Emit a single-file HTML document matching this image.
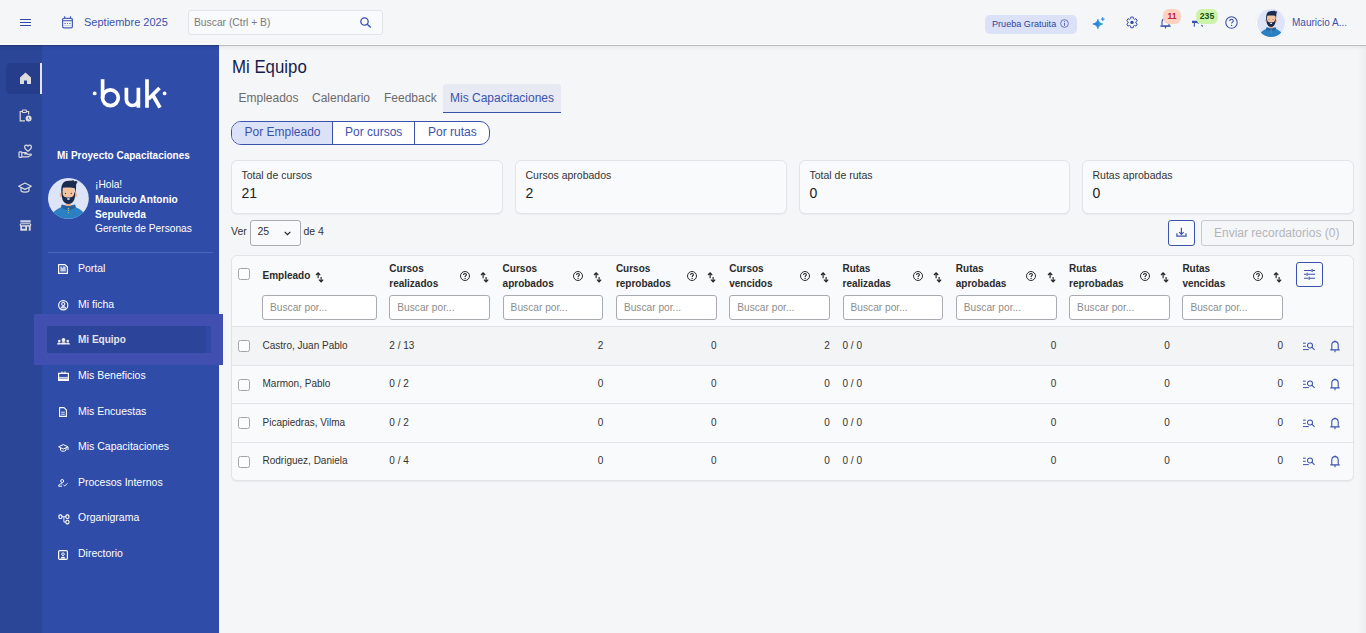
<!DOCTYPE html>
<html><head><meta charset="utf-8">
<style>
*{box-sizing:border-box;margin:0;padding:0}
html,body{width:1366px;height:633px;overflow:hidden}
body{font-family:"Liberation Sans",sans-serif;background:#f5f6f8;position:relative;color:#2b2b2b}
.a{position:absolute;white-space:nowrap}
svg{position:absolute;overflow:visible}
#hdr{position:absolute;left:0;top:0;width:1366px;height:45px;background:#f5f6f8;border-bottom:1px solid #f9fafb;z-index:5;box-shadow:0 1px 0 rgba(0,0,0,.19),0 2px 4px rgba(0,0,0,.07)}
#rail{position:absolute;left:0;top:45px;width:42px;height:588px;background:#2b4597}
#side{position:absolute;left:42px;top:45px;width:177px;height:588px;background:#2f4ca8}
.nav{position:absolute;left:78px;font-size:10.5px;color:#fff;line-height:12px}
.card{position:absolute;top:160px;width:272px;height:54px;border:1px solid #e2e4ea;border-radius:6px;background:#f9fafc;box-shadow:0 1px 1px rgba(0,0,0,.05)}
.card .l{position:absolute;left:9.5px;top:7.8px;font-size:10.5px;color:#333;line-height:12px}
.card .v{position:absolute;left:9.5px;top:24px;font-size:14px;color:#222;line-height:16px}
.th{position:absolute;font-size:10px;font-weight:bold;color:#2a2a2a;line-height:14.5px}
.inp{position:absolute;top:295px;height:24.5px;border:1px solid #a9abb0;border-radius:3px;background:#fff;font-size:10.2px;color:#8d8d8d;padding-left:7px;padding-top:1px;line-height:22px}
.cell{position:absolute;font-size:10px;color:#333;line-height:12px}
.r{text-align:right}
.cb{position:absolute;left:238px;width:12px;height:12px;border:1px solid #a2a4a8;border-radius:2.5px;background:#fcfcfd}
</style></head><body>

<!-- HEADER -->
<div id="hdr">
  <svg style="left:20px;top:18px" width="11" height="9" viewBox="0 0 11 9"><path d="M0.5 1.5H10.5M0.5 4.5H10.5M0.5 7.5H10.5" stroke="#3148a8" stroke-width="1.2" stroke-linecap="round"/></svg>
  <svg style="left:62px;top:16px" width="11" height="13" viewBox="0 0 11 13"><rect x="0.6" y="2.3" width="9.8" height="9.6" rx="1.3" fill="none" stroke="#4a60b4" stroke-width="1.2"/><path d="M0.6 4.7H10.4" stroke="#4a60b4" stroke-width="1.1"/><path d="M2.6 0.2V2.4M8.5 0.2V2.4" stroke="#4a60b4" stroke-width="1.2"/><path d="M2.4 7.5H3.8M5 7.5H6M7.2 7.5H8.6" stroke="#4a60b4" stroke-width="0.9"/><path d="M1.5 9.6H9.5" stroke="#4a60b4" stroke-width="0.4" opacity="0.6"/></svg>
  <div class="a" style="left:84px;top:15px;font-size:11px;color:#3b52ad;line-height:14px">Septiembre 2025</div>
  <div class="a" style="left:187.5px;top:10px;width:195px;height:24.5px;background:#f9fafc;border:1px solid #e3e4e8;border-radius:3px"></div>
  <div class="a" style="left:194px;top:16.5px;font-size:10.3px;color:#7a7a7a;line-height:12px">Buscar (Ctrl + B)</div>
  <svg style="left:360px;top:17px" width="12" height="11" viewBox="0 0 12 11"><circle cx="4.5" cy="4.5" r="3.7" fill="none" stroke="#3b52ad" stroke-width="1.3"/><path d="M7.2 7.2L10.8 10.6" stroke="#3b52ad" stroke-width="1.4"/></svg>
  <!-- right side -->
  <div class="a" style="left:985px;top:15px;width:92px;height:19px;background:#dbe2f7;border-radius:5px"></div>
  <div class="a" style="left:992px;top:17.8px;font-size:9.1px;color:#2f449c;line-height:12px">Prueba Gratuita</div>
  <svg style="left:1060px;top:19px" width="9" height="9" viewBox="0 0 10 10"><circle cx="5" cy="5" r="4.3" fill="none" stroke="#4a5fb2" stroke-width="0.9"/><path d="M5 4.3V7.6" stroke="#4a5fb2" stroke-width="1"/><circle cx="5" cy="2.8" r="0.6" fill="#4a5fb2"/></svg>
  <svg style="left:1092px;top:18px" width="12" height="12" viewBox="0 0 12 12"><defs><linearGradient id="sg" x1="0" y1="0" x2="1" y2="0"><stop offset="0" stop-color="#1f6cf6"/><stop offset="0.6" stop-color="#2b8fd8"/><stop offset="1" stop-color="#2db38c"/></linearGradient></defs><path d="M5.9 1C6.3 3.6 8 5.5 11 6C8 6.5 6.3 8.4 5.9 11C5.5 8.4 3.8 6.5 0.8 6C3.8 5.5 5.5 3.6 5.9 1Z" fill="url(#sg)" stroke="url(#sg)" stroke-width="0.6" stroke-linejoin="round"/><path d="M10.8 -0.8C11 0.2 11.7 0.9 12.7 1.1C11.7 1.3 11 2 10.8 3C10.6 2 9.9 1.3 8.9 1.1C9.9 0.9 10.6 0.2 10.8 -0.8Z" fill="#2e8fe0" stroke="#2e8fe0" stroke-width="0.5"/></svg>
  <svg style="left:1125px;top:16px" width="14" height="13" viewBox="0 0 14 13"><path d="M5.76 1.04L8.24 1.04L8.40 2.76L9.45 3.37L11.02 2.65L12.26 4.79L10.85 5.79L10.85 7.01L12.26 8.01L11.02 10.15L9.45 9.43L8.40 10.04L8.24 11.76L5.76 11.76L5.60 10.04L4.55 9.43L2.98 10.15L1.74 8.01L3.15 7.01L3.15 5.79L1.74 4.79L2.98 2.65L4.55 3.37L5.60 2.76Z" fill="none" stroke="#3b52ad" stroke-width="1.0" stroke-linejoin="round"/><circle cx="7" cy="6.4" r="1.7" fill="#3148a8"/></svg>
  <svg style="left:1160px;top:17px" width="11" height="13" viewBox="0 0 11 13"><path d="M2 9V5.5C2 3.2 3.5 1.6 5.5 1.6C7.5 1.6 9 3.2 9 5.5V9Z" fill="none" stroke="#3b52ad" stroke-width="1.1"/><path d="M0.3 9.2H10.7M5.5 9.5V11.5" stroke="#3b52ad" stroke-width="1.2"/></svg>
  <div class="a" style="left:1163px;top:9px;width:18px;height:15px;background:#fdd2c1;border-radius:6px;font-size:8.6px;font-weight:bold;color:#b8203a;text-align:center;line-height:15px">11</div>
  <svg style="left:1191px;top:19px" width="14" height="10" viewBox="0 0 14 10"><path d="M1 1.8H5.6L8 3.4V4.8L5.6 4.1H1Z" fill="#3b52ad"/><path d="M3.3 4V7.8M10.4 6.1L11.8 7.5" stroke="#3b52ad" stroke-width="1.1"/></svg>
  <div class="a" style="left:1196px;top:9px;width:22px;height:15px;background:#cdf2aa;border-radius:6px;font-size:8.6px;font-weight:bold;color:#0f5211;text-align:center;line-height:15px">235</div>
  <svg style="left:1225px;top:16px" width="13" height="13" viewBox="0 0 13 13"><circle cx="6.5" cy="6.5" r="5.7" fill="none" stroke="#3b52ad" stroke-width="1.1"/><path d="M4.7 5.1C4.7 3.9 5.5 3.3 6.5 3.3C7.5 3.3 8.3 3.9 8.3 4.9C8.3 6.1 6.6 6.2 6.6 7.6" fill="none" stroke="#3b52ad" stroke-width="1.1"/><circle cx="6.6" cy="9.4" r="0.7" fill="#3b52ad"/></svg>
  <div class="a" style="left:1256.40px;top:8.50px;width:29.6px;height:29.6px;border-radius:50%;background:#fff;box-shadow:0 0 1px rgba(0,0,0,.15)"></div><svg style="left:1255.14px;top:7.24px" width="32.25" height="32.25" viewBox="0 0 47 47"><clipPath id="ac1"><circle cx="23.4" cy="23.4" r="20.4"/></clipPath><circle cx="23.4" cy="23.4" r="20.4" fill="#dde4f7"/><g clip-path="url(#ac1)"><path d="M5.8 47C6 39 9.5 34.3 17.5 31.8L23.4 30.3L29.3 31.8C37.3 34.3 40.8 39 41 47Z" fill="#2b7fc3"/><path d="M16.8 29.6L23.4 31L30 29.6L31 32.6L25.4 35L23.4 32.2L21.4 35L15.8 32.6Z" fill="#2462a2"/><rect x="20.8" y="25.5" width="5.2" height="5.5" fill="#e9ae88"/><ellipse cx="15.9" cy="20" rx="1.3" ry="1.9" fill="#eeb48e"/><ellipse cx="30.9" cy="20" rx="1.3" ry="1.9" fill="#eeb48e"/><ellipse cx="23.4" cy="18.2" rx="6.6" ry="8.2" fill="#f4c4a0"/><path d="M16.6 17.5C16.4 25.5 19.3 29 23.4 29C27.5 29 30.4 25.5 30.2 17.5L29.3 17.5C29.2 21.5 27.2 22.6 23.4 22.6C19.6 22.6 17.6 21.5 17.5 17.5Z" fill="#1b2a4f"/><ellipse cx="23.4" cy="23.9" rx="1.6" ry="0.75" fill="#fff"/><path d="M16.4 18.5C15.6 10.5 17.6 6.6 22 6.1C25 5.8 27 6.1 28.3 5.1L29.3 6.6C30.6 5.6 31.8 6.3 32.6 7.2C31.6 7.8 31.5 8.8 31.1 9.8C31.2 13 30.8 15.5 30.4 18.5L29.7 13.2C27.6 12.2 21.6 12.2 17.9 12.8L17.3 18.5Z" fill="#1b2a4f"/><circle cx="20.6" cy="18.4" r="0.65" fill="#3b3b48"/><circle cx="26.2" cy="18.4" r="0.65" fill="#3b3b48"/><circle cx="23.4" cy="33.4" r="0.55" fill="#d9c05a"/><circle cx="23.4" cy="35.5" r="0.55" fill="#d9c05a"/><circle cx="23.4" cy="37.6" r="0.55" fill="#d9c05a"/></g></svg>
  <div class="a" style="left:1292px;top:17px;font-size:10px;color:#3b52ad;line-height:12px">Mauricio A...</div>
</div>

<!-- RAIL -->
<div id="rail"></div>
<div id="side"></div>
<!-- rail icons -->
<div class="a" style="left:6px;top:63px;width:34px;height:31px;background:#263d8c;border-radius:5px 0 0 5px"></div>
<div class="a" style="left:40px;top:63px;width:2px;height:31px;background:#e6e6e6"></div>
<svg style="left:20px;top:72px" width="11" height="12" viewBox="0 0 11 12"><path d="M5.5 0.5L11 5.5V12H7V8.5H4V12H0V5.5Z" fill="#dcdcdc"/></svg>
<svg style="left:19px;top:109px" width="13" height="13" viewBox="0 0 13 13"><path d="M6 11.8H1.2V2.5H3M7.8 2.5H9.6V5.5" fill="none" stroke="#dcdcdc" stroke-width="1.2"/><rect x="3.4" y="1" width="4" height="2.5" rx="0.6" fill="none" stroke="#dcdcdc" stroke-width="1.1"/><circle cx="9.6" cy="9.6" r="3" fill="#dcdcdc"/><path d="M9.5 8.2V9.8L10.6 10.5" stroke="#2b4597" stroke-width="0.8" fill="none"/></svg>
<svg style="left:14px;top:140px" width="24" height="24" viewBox="0 0 24 24"><path d="M14 11.2C11.6 9.5 10.6 8.3 10.6 6.9C10.6 5.9 11.3 5.2 12.3 5.2C13 5.2 13.6 5.6 14 6.2C14.4 5.6 15 5.2 15.7 5.2C16.7 5.2 17.4 5.9 17.4 6.9C17.4 8.3 16.4 9.5 14 11.2Z" fill="none" stroke="#dcdcdc" stroke-width="1.2" stroke-linejoin="round"/><rect x="5" y="11.8" width="2.8" height="5.5" rx="0.7" fill="none" stroke="#dcdcdc" stroke-width="1.2"/><path d="M7.8 12.6H11.6C12.4 12.6 13 13.1 13.2 13.9H10.2M7.8 16.8H14.3L17.2 15.1C17.6 14.6 17.3 13.9 16.6 14L13.3 14.6" fill="none" stroke="#dcdcdc" stroke-width="1.2" stroke-linejoin="round"/></svg>
<svg style="left:18px;top:182px" width="14" height="12" viewBox="0 0 14 12"><path d="M7 1L13.3 4.2L7 7.4L0.7 4.2Z" fill="none" stroke="#dcdcdc" stroke-width="1.2" stroke-linejoin="round"/><path d="M3 5.6V8.8C4.5 10.6 9.5 10.6 11 8.8V5.6" fill="none" stroke="#dcdcdc" stroke-width="1.2"/></svg>
<svg style="left:19px;top:219px" width="13" height="13" viewBox="0 0 13 13"><rect x="1.3" y="1.2" width="10.4" height="2.3" fill="#c5cbe3"/><rect x="1.2" y="4.7" width="10.6" height="2.1" rx="1.05" fill="none" stroke="#dcdcdc" stroke-width="1.1"/><path d="M1.3 6.8H11.7V11.7H1.3Z" fill="#dcdcdc"/><rect x="3" y="7.7" width="3.3" height="2" fill="#2b4597"/><rect x="8" y="7.7" width="1.8" height="4.1" fill="#2b4597"/></svg>

<!-- logo -->
<svg style="left:90px;top:76px" width="80" height="34" viewBox="90 76 80 34"><circle cx="94.7" cy="93.4" r="1.9" fill="#fff"/><circle cx="164.6" cy="93.4" r="1.9" fill="#fff"/><g fill="none" stroke="#fff" stroke-width="3.7"><path d="M102.6 79.2V98"/><circle cx="110.4" cy="97.8" r="7.9"/><path d="M126.4 87.7V99.5A6 6 0 0 0 138.4 99.5V87.7M138.4 99V107.7"/><path d="M147 79.2V107.7M159.5 88L148.5 99M152.8 95L160 107.7"/></g></svg>

<div class="a" style="left:57px;top:150px;font-size:10px;font-weight:bold;color:#fff;line-height:12px">Mi Proyecto Capacitaciones</div>
<svg style="left:45px;top:175px" width="47" height="47" viewBox="0 0 47 47"><clipPath id="ac2"><circle cx="23.4" cy="23.4" r="20.4"/></clipPath><circle cx="23.4" cy="23.4" r="20.4" fill="#dde4f7"/><g clip-path="url(#ac2)"><path d="M5.8 47C6 39 9.5 34.3 17.5 31.8L23.4 30.3L29.3 31.8C37.3 34.3 40.8 39 41 47Z" fill="#2b7fc3"/><path d="M16.8 29.6L23.4 31L30 29.6L31 32.6L25.4 35L23.4 32.2L21.4 35L15.8 32.6Z" fill="#2462a2"/><rect x="20.8" y="25.5" width="5.2" height="5.5" fill="#e9ae88"/><ellipse cx="15.9" cy="20" rx="1.3" ry="1.9" fill="#eeb48e"/><ellipse cx="30.9" cy="20" rx="1.3" ry="1.9" fill="#eeb48e"/><ellipse cx="23.4" cy="18.2" rx="6.6" ry="8.2" fill="#f4c4a0"/><path d="M16.6 17.5C16.4 25.5 19.3 29 23.4 29C27.5 29 30.4 25.5 30.2 17.5L29.3 17.5C29.2 21.5 27.2 22.6 23.4 22.6C19.6 22.6 17.6 21.5 17.5 17.5Z" fill="#1b2a4f"/><ellipse cx="23.4" cy="23.9" rx="1.6" ry="0.75" fill="#fff"/><path d="M16.4 18.5C15.6 10.5 17.6 6.6 22 6.1C25 5.8 27 6.1 28.3 5.1L29.3 6.6C30.6 5.6 31.8 6.3 32.6 7.2C31.6 7.8 31.5 8.8 31.1 9.8C31.2 13 30.8 15.5 30.4 18.5L29.7 13.2C27.6 12.2 21.6 12.2 17.9 12.8L17.3 18.5Z" fill="#1b2a4f"/><circle cx="20.6" cy="18.4" r="0.65" fill="#3b3b48"/><circle cx="26.2" cy="18.4" r="0.65" fill="#3b3b48"/><circle cx="23.4" cy="33.4" r="0.55" fill="#d9c05a"/><circle cx="23.4" cy="35.5" r="0.55" fill="#d9c05a"/><circle cx="23.4" cy="37.6" r="0.55" fill="#d9c05a"/></g></svg>
<div class="a" style="left:95px;top:178.5px;font-size:10.2px;color:#fff;line-height:12px">¡Hola!</div>
<div class="a" style="left:95px;top:194px;font-size:10.2px;font-weight:bold;color:#fff;line-height:12px">Mauricio Antonio</div>
<div class="a" style="left:95px;top:208.5px;font-size:10.2px;font-weight:bold;color:#fff;line-height:12px">Sepulveda</div>
<div class="a" style="left:95px;top:222.5px;font-size:10.2px;color:#fff;line-height:12px">Gerente de Personas</div>
<div class="a" style="left:48px;top:252px;width:165px;height:1px;background:#4d65bb"></div>

<!-- nav -->
<div class="a" style="left:34px;top:314px;width:189px;height:50.5px;background:#4150b0"></div>
<div class="a" style="left:47px;top:325.7px;width:164px;height:27px;background:#3049a7"></div><div class="a" style="left:47px;top:325.7px;width:158.7px;height:27px;background:#2c449a;border-radius:3px"></div>
<div class="nav" style="top:262px">Portal</div>
<div class="nav" style="top:298px">Mi ficha</div>
<div class="nav" style="top:334px;color:#e4e4ea;font-weight:bold;font-size:10px">Mi Equipo</div>
<div class="nav" style="top:369px">Mis Beneficios</div>
<div class="nav" style="top:404.5px">Mis Encuestas</div>
<div class="nav" style="top:440px">Mis Capacitaciones</div>
<div class="nav" style="top:475.5px">Procesos Internos</div>
<div class="nav" style="top:511px">Organigrama</div>
<div class="nav" style="top:546.5px">Directorio</div>

<!-- nav icons -->
<svg style="left:58px;top:264px" width="10" height="10" viewBox="0 0 10 10"><path d="M0.6 0.6H7L9.4 3V9.4H0.6Z" fill="none" stroke="#fff" stroke-width="1.2" stroke-linejoin="round"/><rect x="2.3" y="2.5" width="5.4" height="5" fill="#c9cde6"/><path d="M4.5 2.3V4" stroke="#2f4ca8" stroke-width="0.8"/></svg>
<svg style="left:58px;top:299.5px" width="10.5" height="10.5" viewBox="0 0 10 10"><circle cx="5" cy="5" r="4.4" fill="none" stroke="#fff" stroke-width="1.1"/><circle cx="5" cy="3.8" r="1.5" fill="none" stroke="#fff" stroke-width="1"/><path d="M2.3 8.2C3 6.5 4 6.2 5 6.2C6 6.2 7 6.5 7.7 8.2" fill="#d0d4ea" stroke="#fff" stroke-width="0.8"/></svg>
<svg style="left:56.5px;top:337.5px" width="13" height="7" viewBox="0 0 13 7"><circle cx="6.5" cy="2" r="1.9" fill="#eeeef2"/><circle cx="2.3" cy="3" r="1.3" fill="#eeeef2"/><circle cx="10.7" cy="3" r="1.3" fill="#eeeef2"/><path d="M3.4 6.5C3.6 4.8 4.8 4.3 6.5 4.3C8.2 4.3 9.4 4.8 9.6 6.5Z M0 6.5C0.2 5.1 1 4.6 2.3 4.6C3 4.6 3.5 4.8 3.8 5.2L3.2 6.5Z M13 6.5C12.8 5.1 12 4.6 10.7 4.6C10 4.6 9.5 4.8 9.2 5.2L9.8 6.5Z" fill="#eeeef2"/></svg>
<svg style="left:58px;top:371px" width="11" height="10" viewBox="0 0 11 10"><path d="M0.6 2.4H10.4V9.4H0.6Z" fill="none" stroke="#fff" stroke-width="1.2"/><path d="M1 6.5H10" stroke="#d0d4ea" stroke-width="1.2"/><path d="M3 2.4L4 0.6L5.5 2.4L7 0.6L8 2.4" fill="none" stroke="#e0e3f2" stroke-width="0.9"/><path d="M1 8.3H10" stroke="#fff" stroke-width="1.6"/></svg>
<svg style="left:59px;top:407px" width="8" height="10" viewBox="0 0 8 10"><path d="M0.6 0.6H5L7.4 3V9.4H0.6Z" fill="none" stroke="#fff" stroke-width="1.1" stroke-linejoin="round"/><path d="M2.2 5.2H5.8M2.2 7.2H5.8" stroke="#fff" stroke-width="0.9"/></svg>
<svg style="left:58px;top:444px" width="11" height="8" viewBox="0 0 11 8"><path d="M5.3 0.6L10 2.8L5.3 5L0.6 2.8Z" fill="none" stroke="#fff" stroke-width="1" stroke-linejoin="round"/><path d="M2.5 4V6.2C3.5 7.6 7 7.6 8 6.2V4M10 2.8V6" fill="none" stroke="#fff" stroke-width="1"/></svg>
<svg style="left:58px;top:479px" width="10" height="8" viewBox="0 0 10 8"><circle cx="4.2" cy="2" r="1.5" fill="none" stroke="#fff" stroke-width="1"/><path d="M4 7.2H0.6C0.6 5.5 1.8 4.8 4.2 4.8" fill="none" stroke="#fff" stroke-width="1"/><path d="M5.3 5.6L6.7 7L9.6 4.3" fill="none" stroke="#fff" stroke-width="0.9"/></svg>
<svg style="left:57.5px;top:513.5px" width="12" height="11" viewBox="0 0 12 11"><rect x="0.9" y="0.9" width="3" height="3.6" rx="1.2" fill="none" stroke="#fff" stroke-width="1.1"/><rect x="7.9" y="0.9" width="3" height="3.6" rx="1.2" fill="none" stroke="#fff" stroke-width="1.1"/><rect x="7.9" y="6.3" width="3" height="3.6" rx="1.2" fill="none" stroke="#fff" stroke-width="1.1"/><path d="M3.9 2.7H7.9M5.9 2.7V8.1H7.9" fill="none" stroke="#fff" stroke-width="0.9"/></svg>
<svg style="left:58px;top:550px" width="10" height="10" viewBox="0 0 10 10"><rect x="0.6" y="0.6" width="8.8" height="8.8" rx="1.2" fill="none" stroke="#fff" stroke-width="1.2"/><circle cx="5" cy="4.2" r="1.3" fill="none" stroke="#fff" stroke-width="1"/><path d="M2.5 8.5C3 7 4 6.7 5 6.7C6 6.7 7 7 7.5 8.5Z" fill="#fff"/></svg>

<!-- MAIN -->
<div class="a" style="left:231.5px;top:57.2px;font-size:17.8px;color:#161c4a;line-height:20px;transform:scaleX(0.945);transform-origin:0 0">Mi Equipo</div>
<div class="a" style="left:238.5px;top:91px;font-size:12px;color:#6b6b6b;line-height:14px">Empleados</div>
<div class="a" style="left:312px;top:91px;font-size:12px;color:#6b6b6b;line-height:14px">Calendario</div>
<div class="a" style="left:384px;top:91px;font-size:12px;color:#6b6b6b;line-height:14px">Feedback</div>
<div class="a" style="left:443px;top:84px;width:118px;height:29px;background:#e7e9f3;border-radius:3px 3px 0 0;border-bottom:1.5px solid #3b52ad"></div>
<div class="a" style="left:450px;top:91px;font-size:12px;color:#3b52ad;line-height:14px">Mis Capacitaciones</div>
<!-- segmented -->
<div class="a" style="left:231px;top:121px;width:259px;height:24px;border:1px solid #3b52ad;border-radius:10px;background:#fff;overflow:hidden">
  <div class="a" style="left:0;top:0;width:101px;height:22px;background:#dbe2f7;border-right:1px solid #3b52ad"></div>
  <div class="a" style="left:181.5px;top:0;width:1px;height:22px;background:#3b52ad"></div>
</div>
<div class="a" style="left:244.5px;top:125px;font-size:12px;color:#3b52ad;line-height:14px">Por Empleado</div>
<div class="a" style="left:345px;top:125px;font-size:12px;color:#3b52ad;line-height:14px">Por cursos</div>
<div class="a" style="left:428px;top:125px;font-size:12px;color:#3b52ad;line-height:14px">Por rutas</div>
<!-- cards -->
<div class="card" style="left:231px"><div class="l">Total de cursos</div><div class="v">21</div></div>
<div class="card" style="left:515px"><div class="l">Cursos aprobados</div><div class="v">2</div></div>
<div class="card" style="left:799px;width:271px"><div class="l">Total de rutas</div><div class="v">0</div></div>
<div class="card" style="left:1082px"><div class="l">Rutas aprobadas</div><div class="v">0</div></div>
<!-- controls -->
<div class="a" style="left:231px;top:225px;font-size:10.5px;color:#333;line-height:12px">Ver</div>
<div class="a" style="left:250px;top:220px;width:51px;height:26px;border:1px solid #a9abb0;border-radius:3px;background:#f9fafc"></div>
<div class="a" style="left:257.5px;top:225px;font-size:10.5px;color:#333;line-height:12px">25</div>
<svg style="left:284px;top:230.8px" width="7" height="5" viewBox="0 0 7 5"><path d="M0.7 0.8L3.5 3.6L6.3 0.8" fill="none" stroke="#222" stroke-width="1.2"/></svg>
<div class="a" style="left:303.5px;top:225px;font-size:10.5px;color:#333;line-height:12px">de 4</div>
<div class="a" style="left:1168px;top:220px;width:27px;height:26px;border:1px solid #3b52ad;border-radius:3px;background:#f9fafc"></div>
<svg style="left:1176px;top:227px" width="11" height="11" viewBox="0 0 11 11"><path d="M5.4 0.8V7.2M3.2 5.1L5.4 7.3L7.6 5.1M0.9 6.3V9.2H10V6.3" fill="none" stroke="#3b52ad" stroke-width="1.2"/></svg>
<div class="a" style="left:1201px;top:220px;width:153px;height:26px;border:1px solid #c9cacd;border-radius:3px;background:#f5f6f8"></div>
<div class="a" style="left:1214px;top:226px;font-size:12px;color:#b4b5b8;line-height:14px">Enviar recordatorios (0)</div>
<!-- table -->
<div class="a" style="left:231px;top:255px;width:1123px;height:226px;border:1px solid #e3e4e8;border-radius:6px;background:#f9fafc;box-shadow:0 1px 1px rgba(0,0,0,.06)"></div>
<div class="a" style="left:232px;top:325.5px;width:1121px;height:1px;background:#e3e4e8"></div>
<div class="a" style="left:1296px;top:262px;width:27px;height:25px;border:1px solid #3b52ad;border-radius:3px;background:#f9fafc"></div>
<svg style="left:1304px;top:268px" width="11" height="12" viewBox="0 0 11 12"><path d="M0 2.5H7.3M8.9 2.5H11M0 6.3H2.3M3.9 6.3H11M0 10.3H4.4M6 10.3H11" fill="none" stroke="#3b52ad" stroke-width="1.1"/><path d="M8.1 1V4M3.1 4.8V7.8M5.2 8.8V11.8" fill="none" stroke="#3b52ad" stroke-width="1.2"/></svg>

<!-- TABLE START -->
<div class="cb" style="top:268px"></div>
<div class="th" style="left:262.5px;top:268.5px">Empleado</div>
<svg style="left:314.7px;top:271.5px" width="9" height="10" viewBox="0 0 9 10"><path d="M3.1 6.2V0.9M1 3L3.1 0.8L5.2 3M6.1 4.9V9.8M4 7.7L6.1 9.9L8.2 7.7" fill="none" stroke="#222" stroke-width="1.15"/></svg>
<div class="inp" style="left:262px;width:115px">Buscar por...</div>
<div class="th" style="left:389.3px;top:262px">Cursos<br>realizados</div>
<svg style="left:459.9px;top:271px" width="10" height="10" viewBox="0 0 10 10"><circle cx="5" cy="5" r="4.5" fill="none" stroke="#222" stroke-width="0.95"/><path d="M3.6 3.9C3.6 3 4.2 2.4 5 2.4C5.8 2.4 6.4 3 6.4 3.7C6.4 4.6 5.1 4.7 5.1 5.9" fill="none" stroke="#222" stroke-width="1.05"/><circle cx="5.1" cy="7.4" r="0.65" fill="#222"/></svg>
<svg style="left:480.1px;top:271.5px" width="9" height="10" viewBox="0 0 9 10"><path d="M3.1 6.2V0.9M1 3L3.1 0.8L5.2 3M6.1 4.9V9.8M4 7.7L6.1 9.9L8.2 7.7" fill="none" stroke="#222" stroke-width="1.15"/></svg>
<div class="inp" style="left:389.3px;width:100.8px">Buscar por...</div>
<div class="th" style="left:502.6px;top:262px">Cursos<br>aprobados</div>
<svg style="left:573.2px;top:271px" width="10" height="10" viewBox="0 0 10 10"><circle cx="5" cy="5" r="4.5" fill="none" stroke="#222" stroke-width="0.95"/><path d="M3.6 3.9C3.6 3 4.2 2.4 5 2.4C5.8 2.4 6.4 3 6.4 3.7C6.4 4.6 5.1 4.7 5.1 5.9" fill="none" stroke="#222" stroke-width="1.05"/><circle cx="5.1" cy="7.4" r="0.65" fill="#222"/></svg>
<svg style="left:593.4px;top:271.5px" width="9" height="10" viewBox="0 0 9 10"><path d="M3.1 6.2V0.9M1 3L3.1 0.8L5.2 3M6.1 4.9V9.8M4 7.7L6.1 9.9L8.2 7.7" fill="none" stroke="#222" stroke-width="1.15"/></svg>
<div class="inp" style="left:502.6px;width:100.8px">Buscar por...</div>
<div class="th" style="left:615.9px;top:262px">Cursos<br>reprobados</div>
<svg style="left:686.5px;top:271px" width="10" height="10" viewBox="0 0 10 10"><circle cx="5" cy="5" r="4.5" fill="none" stroke="#222" stroke-width="0.95"/><path d="M3.6 3.9C3.6 3 4.2 2.4 5 2.4C5.8 2.4 6.4 3 6.4 3.7C6.4 4.6 5.1 4.7 5.1 5.9" fill="none" stroke="#222" stroke-width="1.05"/><circle cx="5.1" cy="7.4" r="0.65" fill="#222"/></svg>
<svg style="left:706.7px;top:271.5px" width="9" height="10" viewBox="0 0 9 10"><path d="M3.1 6.2V0.9M1 3L3.1 0.8L5.2 3M6.1 4.9V9.8M4 7.7L6.1 9.9L8.2 7.7" fill="none" stroke="#222" stroke-width="1.15"/></svg>
<div class="inp" style="left:615.9px;width:100.8px">Buscar por...</div>
<div class="th" style="left:729.2px;top:262px">Cursos<br>vencidos</div>
<svg style="left:799.8px;top:271px" width="10" height="10" viewBox="0 0 10 10"><circle cx="5" cy="5" r="4.5" fill="none" stroke="#222" stroke-width="0.95"/><path d="M3.6 3.9C3.6 3 4.2 2.4 5 2.4C5.8 2.4 6.4 3 6.4 3.7C6.4 4.6 5.1 4.7 5.1 5.9" fill="none" stroke="#222" stroke-width="1.05"/><circle cx="5.1" cy="7.4" r="0.65" fill="#222"/></svg>
<svg style="left:820.0px;top:271.5px" width="9" height="10" viewBox="0 0 9 10"><path d="M3.1 6.2V0.9M1 3L3.1 0.8L5.2 3M6.1 4.9V9.8M4 7.7L6.1 9.9L8.2 7.7" fill="none" stroke="#222" stroke-width="1.15"/></svg>
<div class="inp" style="left:729.2px;width:100.8px">Buscar por...</div>
<div class="th" style="left:842.5px;top:262px">Rutas<br>realizadas</div>
<svg style="left:913.1px;top:271px" width="10" height="10" viewBox="0 0 10 10"><circle cx="5" cy="5" r="4.5" fill="none" stroke="#222" stroke-width="0.95"/><path d="M3.6 3.9C3.6 3 4.2 2.4 5 2.4C5.8 2.4 6.4 3 6.4 3.7C6.4 4.6 5.1 4.7 5.1 5.9" fill="none" stroke="#222" stroke-width="1.05"/><circle cx="5.1" cy="7.4" r="0.65" fill="#222"/></svg>
<svg style="left:933.3px;top:271.5px" width="9" height="10" viewBox="0 0 9 10"><path d="M3.1 6.2V0.9M1 3L3.1 0.8L5.2 3M6.1 4.9V9.8M4 7.7L6.1 9.9L8.2 7.7" fill="none" stroke="#222" stroke-width="1.15"/></svg>
<div class="inp" style="left:842.5px;width:100.8px">Buscar por...</div>
<div class="th" style="left:955.8px;top:262px">Rutas<br>aprobadas</div>
<svg style="left:1026.4px;top:271px" width="10" height="10" viewBox="0 0 10 10"><circle cx="5" cy="5" r="4.5" fill="none" stroke="#222" stroke-width="0.95"/><path d="M3.6 3.9C3.6 3 4.2 2.4 5 2.4C5.8 2.4 6.4 3 6.4 3.7C6.4 4.6 5.1 4.7 5.1 5.9" fill="none" stroke="#222" stroke-width="1.05"/><circle cx="5.1" cy="7.4" r="0.65" fill="#222"/></svg>
<svg style="left:1046.6px;top:271.5px" width="9" height="10" viewBox="0 0 9 10"><path d="M3.1 6.2V0.9M1 3L3.1 0.8L5.2 3M6.1 4.9V9.8M4 7.7L6.1 9.9L8.2 7.7" fill="none" stroke="#222" stroke-width="1.15"/></svg>
<div class="inp" style="left:955.8px;width:100.8px">Buscar por...</div>
<div class="th" style="left:1069.1px;top:262px">Rutas<br>reprobadas</div>
<svg style="left:1139.7px;top:271px" width="10" height="10" viewBox="0 0 10 10"><circle cx="5" cy="5" r="4.5" fill="none" stroke="#222" stroke-width="0.95"/><path d="M3.6 3.9C3.6 3 4.2 2.4 5 2.4C5.8 2.4 6.4 3 6.4 3.7C6.4 4.6 5.1 4.7 5.1 5.9" fill="none" stroke="#222" stroke-width="1.05"/><circle cx="5.1" cy="7.4" r="0.65" fill="#222"/></svg>
<svg style="left:1159.9px;top:271.5px" width="9" height="10" viewBox="0 0 9 10"><path d="M3.1 6.2V0.9M1 3L3.1 0.8L5.2 3M6.1 4.9V9.8M4 7.7L6.1 9.9L8.2 7.7" fill="none" stroke="#222" stroke-width="1.15"/></svg>
<div class="inp" style="left:1069.1px;width:100.8px">Buscar por...</div>
<div class="th" style="left:1182.4px;top:262px">Rutas<br>vencidas</div>
<svg style="left:1253.0px;top:271px" width="10" height="10" viewBox="0 0 10 10"><circle cx="5" cy="5" r="4.5" fill="none" stroke="#222" stroke-width="0.95"/><path d="M3.6 3.9C3.6 3 4.2 2.4 5 2.4C5.8 2.4 6.4 3 6.4 3.7C6.4 4.6 5.1 4.7 5.1 5.9" fill="none" stroke="#222" stroke-width="1.05"/><circle cx="5.1" cy="7.4" r="0.65" fill="#222"/></svg>
<svg style="left:1273.2px;top:271.5px" width="9" height="10" viewBox="0 0 9 10"><path d="M3.1 6.2V0.9M1 3L3.1 0.8L5.2 3M6.1 4.9V9.8M4 7.7L6.1 9.9L8.2 7.7" fill="none" stroke="#222" stroke-width="1.15"/></svg>
<div class="inp" style="left:1182.4px;width:100.8px">Buscar por...</div>
<div class="a" style="left:232px;top:326.3px;width:1121px;height:38.7px;background:#f3f4f6"></div>
<div class="cb" style="top:340.2px"></div>
<div class="cell" style="left:262.5px;top:340.33px">Castro, Juan Pablo</div>
<div class="cell" style="left:389.3px;top:340.33px">2 / 13</div>
<div class="cell r" style="left:502.6px;width:100.6px;top:340.33px">2</div>
<div class="cell r" style="left:615.9px;width:100.6px;top:340.33px">0</div>
<div class="cell r" style="left:729.2px;width:100.6px;top:340.33px">2</div>
<div class="cell" style="left:842.5px;top:340.33px">0 / 0</div>
<div class="cell r" style="left:955.8px;width:100.6px;top:340.33px">0</div>
<div class="cell r" style="left:1069.1px;width:100.6px;top:340.33px">0</div>
<div class="cell r" style="left:1182.4px;width:100.6px;top:340.33px">0</div>
<svg style="left:1303.3px;top:342.4px" width="12" height="9" viewBox="0 0 12 9"><path d="M0 1.2H2.8M0 4.3H2.8M0 7.6H5.8" stroke="#3b52ad" stroke-width="1"/><circle cx="7" cy="3.4" r="2.5" fill="none" stroke="#3b52ad" stroke-width="1.05"/><path d="M8.8 5.2L11.6 7.9" stroke="#3b52ad" stroke-width="1.05"/></svg>
<svg style="left:1329.5px;top:340.4px" width="10" height="13" viewBox="0 0 10 13"><path d="M1.8 9.8V5C1.8 3 3.2 1.6 5 1.6C6.8 1.6 8.2 3 8.2 5V9.8" fill="none" stroke="#3b52ad" stroke-width="1.1"/><path d="M0.3 9.9H9.7M5 0.4V1.7M5 10V12.2" stroke="#3b52ad" stroke-width="1.1"/></svg>
<div class="a" style="left:232px;top:365px;width:1121px;height:1px;background:#e3e4e8"></div>
<div class="cb" style="top:378.8px"></div>
<div class="cell" style="left:262.5px;top:377.93px">Marmon, Pablo</div>
<div class="cell" style="left:389.3px;top:377.93px">0 / 2</div>
<div class="cell r" style="left:502.6px;width:100.6px;top:377.93px">0</div>
<div class="cell r" style="left:615.9px;width:100.6px;top:377.93px">0</div>
<div class="cell r" style="left:729.2px;width:100.6px;top:377.93px">0</div>
<div class="cell" style="left:842.5px;top:377.93px">0 / 0</div>
<div class="cell r" style="left:955.8px;width:100.6px;top:377.93px">0</div>
<div class="cell r" style="left:1069.1px;width:100.6px;top:377.93px">0</div>
<div class="cell r" style="left:1182.4px;width:100.6px;top:377.93px">0</div>
<svg style="left:1303.3px;top:380.0px" width="12" height="9" viewBox="0 0 12 9"><path d="M0 1.2H2.8M0 4.3H2.8M0 7.6H5.8" stroke="#3b52ad" stroke-width="1"/><circle cx="7" cy="3.4" r="2.5" fill="none" stroke="#3b52ad" stroke-width="1.05"/><path d="M8.8 5.2L11.6 7.9" stroke="#3b52ad" stroke-width="1.05"/></svg>
<svg style="left:1329.5px;top:378.0px" width="10" height="13" viewBox="0 0 10 13"><path d="M1.8 9.8V5C1.8 3 3.2 1.6 5 1.6C6.8 1.6 8.2 3 8.2 5V9.8" fill="none" stroke="#3b52ad" stroke-width="1.1"/><path d="M0.3 9.9H9.7M5 0.4V1.7M5 10V12.2" stroke="#3b52ad" stroke-width="1.1"/></svg>
<div class="a" style="left:232px;top:403px;width:1121px;height:1px;background:#e3e4e8"></div>
<div class="cb" style="top:417.4px"></div>
<div class="cell" style="left:262.5px;top:416.73px">Picapiedras, Vilma</div>
<div class="cell" style="left:389.3px;top:416.73px">0 / 2</div>
<div class="cell r" style="left:502.6px;width:100.6px;top:416.73px">0</div>
<div class="cell r" style="left:615.9px;width:100.6px;top:416.73px">0</div>
<div class="cell r" style="left:729.2px;width:100.6px;top:416.73px">0</div>
<div class="cell" style="left:842.5px;top:416.73px">0 / 0</div>
<div class="cell r" style="left:955.8px;width:100.6px;top:416.73px">0</div>
<div class="cell r" style="left:1069.1px;width:100.6px;top:416.73px">0</div>
<div class="cell r" style="left:1182.4px;width:100.6px;top:416.73px">0</div>
<svg style="left:1303.3px;top:418.8px" width="12" height="9" viewBox="0 0 12 9"><path d="M0 1.2H2.8M0 4.3H2.8M0 7.6H5.8" stroke="#3b52ad" stroke-width="1"/><circle cx="7" cy="3.4" r="2.5" fill="none" stroke="#3b52ad" stroke-width="1.05"/><path d="M8.8 5.2L11.6 7.9" stroke="#3b52ad" stroke-width="1.05"/></svg>
<svg style="left:1329.5px;top:416.8px" width="10" height="13" viewBox="0 0 10 13"><path d="M1.8 9.8V5C1.8 3 3.2 1.6 5 1.6C6.8 1.6 8.2 3 8.2 5V9.8" fill="none" stroke="#3b52ad" stroke-width="1.1"/><path d="M0.3 9.9H9.7M5 0.4V1.7M5 10V12.2" stroke="#3b52ad" stroke-width="1.1"/></svg>
<div class="a" style="left:232px;top:442px;width:1121px;height:1px;background:#e3e4e8"></div>
<div class="cb" style="top:456.0px"></div>
<div class="cell" style="left:262.5px;top:454.63px">Rodriguez, Daniela</div>
<div class="cell" style="left:389.3px;top:454.63px">0 / 4</div>
<div class="cell r" style="left:502.6px;width:100.6px;top:454.63px">0</div>
<div class="cell r" style="left:615.9px;width:100.6px;top:454.63px">0</div>
<div class="cell r" style="left:729.2px;width:100.6px;top:454.63px">0</div>
<div class="cell" style="left:842.5px;top:454.63px">0 / 0</div>
<div class="cell r" style="left:955.8px;width:100.6px;top:454.63px">0</div>
<div class="cell r" style="left:1069.1px;width:100.6px;top:454.63px">0</div>
<div class="cell r" style="left:1182.4px;width:100.6px;top:454.63px">0</div>
<svg style="left:1303.3px;top:456.7px" width="12" height="9" viewBox="0 0 12 9"><path d="M0 1.2H2.8M0 4.3H2.8M0 7.6H5.8" stroke="#3b52ad" stroke-width="1"/><circle cx="7" cy="3.4" r="2.5" fill="none" stroke="#3b52ad" stroke-width="1.05"/><path d="M8.8 5.2L11.6 7.9" stroke="#3b52ad" stroke-width="1.05"/></svg>
<svg style="left:1329.5px;top:454.7px" width="10" height="13" viewBox="0 0 10 13"><path d="M1.8 9.8V5C1.8 3 3.2 1.6 5 1.6C6.8 1.6 8.2 3 8.2 5V9.8" fill="none" stroke="#3b52ad" stroke-width="1.1"/><path d="M0.3 9.9H9.7M5 0.4V1.7M5 10V12.2" stroke="#3b52ad" stroke-width="1.1"/></svg>
<div class="a" style="left:232px;top:325.5px;width:1121px;height:1px;background:#e3e4e8"></div>
<!-- TABLE END -->
<div class="a" style="left:1358px;top:45px;width:8px;height:588px;background:linear-gradient(90deg,rgba(0,0,0,0),rgba(0,0,0,.035))"></div>
</body></html>
